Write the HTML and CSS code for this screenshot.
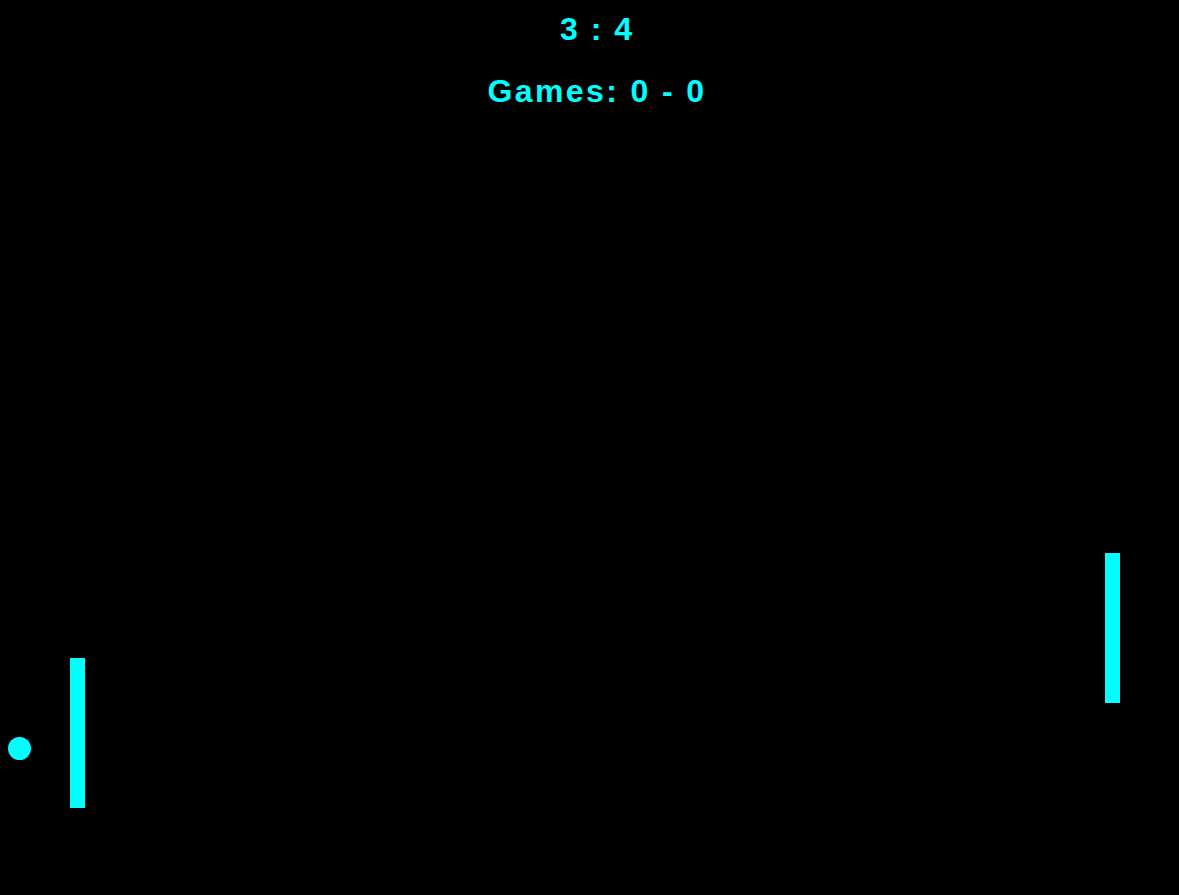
FILE: index.html
```html
<!DOCTYPE html>
<html>
<head>
<meta charset="utf-8">
<link rel="stylesheet" href="styles.css">
</head>
<body>
<div class="game">
  <header class="hud">
    <div class="score">3 : 4</div>
    <div class="games">Games: 0 - 0</div>
  </header>
  <div class="paddle paddle-left"></div>
  <div class="paddle paddle-right"></div>
  <div class="ball"></div>
</div>
</body>
</html>
```
FILE: styles.css
```css
html, body {
  margin: 0;
  padding: 0;
  background: #000;
  height: 100%;
  overflow: hidden;
}
.game {
  position: relative;
  width: 1179px;
  height: 895px;
  background: #000;
  color: #00ffff;
  font-family: "Liberation Sans", Arial, sans-serif;
  font-weight: bold;
}
.hud {
  display: flex;
  flex-direction: column;
  align-items: center;
  padding-left: 15px;
  padding-top: 13px;
}
.score {
  font-size: 32px;
  line-height: 32px;
  letter-spacing: 2px;
}
.games {
  font-size: 32px;
  line-height: 32px;
  letter-spacing: 2.4px;
  margin-top: 30px;
}
.paddle {
  position: absolute;
  width: 15px;
  height: 150px;
  background: #00ffff;
}
.paddle-left { left: 70px; top: 658px; }
.paddle-right { left: 1105px; top: 553px; }
.ball {
  position: absolute;
  left: 8px;
  top: 737px;
  width: 23px;
  height: 23px;
  border-radius: 50%;
  background: #00ffff;
}
```
